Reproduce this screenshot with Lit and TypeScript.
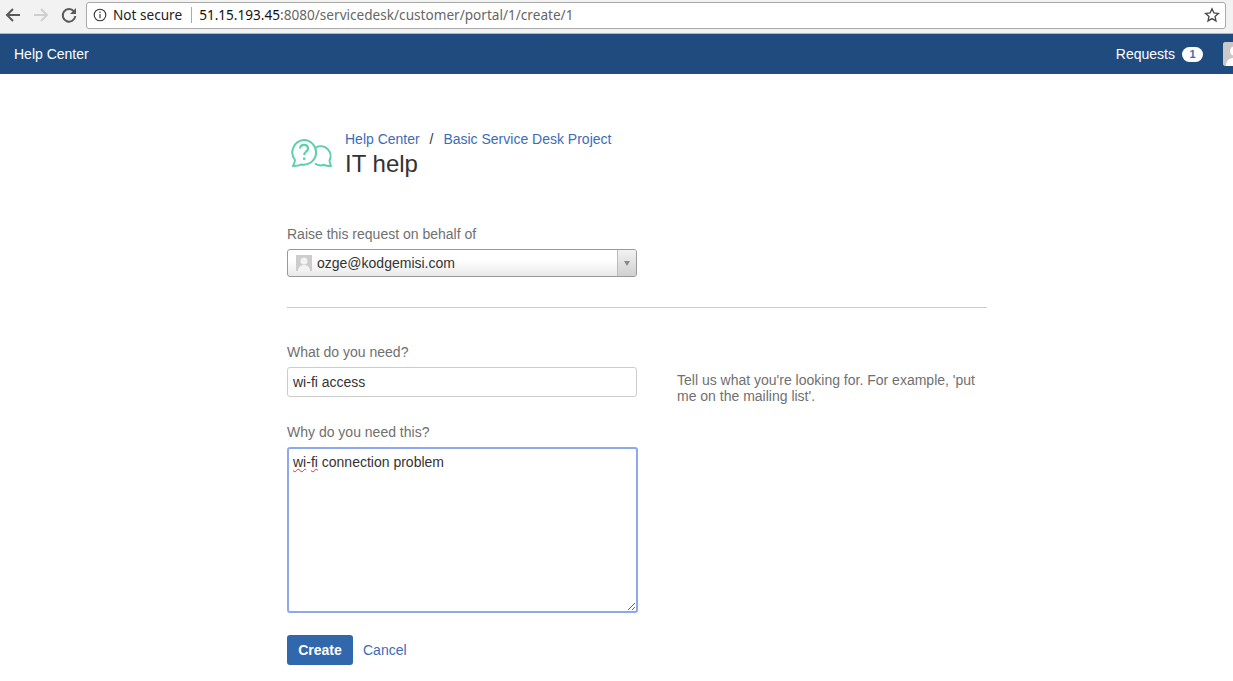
import { LitElement, html, css } from "lit";
import { customElement } from "lit/decorators.js";

@customElement("app-root")
export class AppRoot extends LitElement {
  static styles = css`
    :host { display: block; height: 681px; overflow: hidden; background: #fff; font-family: "Liberation Sans", Arial, sans-serif; font-size: 14px; color: #333; }
    * { box-sizing: border-box; }
    a { color: #3b6cb8; text-decoration: none; }
    .chrome { height: 34px; background: #f2f2f2; border-bottom: 1px solid #b5b5b5; display: flex; align-items: center; padding: 0 0 2px 3px; }
    .nav { width: 18px; height: 18px; display: block; }
    .navs { display: flex; gap: 10px; width: 83px; align-items: center; padding: 0 0 2px 1px; }
    .omni { width: 1140px; height: 27px; background: #fff; border: 1px solid #a9a9a9; border-radius: 3px; display: flex; align-items: center; padding: 0 5px 2px 6px; font-family: "Noto Sans", sans-serif; font-size: 13.6px; white-space: nowrap; color: #222; }
    .info { width: 14px; height: 14px; margin-right: 6px; flex: none; }
    .sep { width: 1px; height: 16px; background: #aaa; margin: 0 7px 0 9px; }
    .host { color: #111; }
    .path { color: #666; }
    .star { margin-left: auto; width: 16px; height: 16px; }
    .bar { height: 40px; background: #204b7f; display: flex; align-items: center; color: #fff; padding-left: 14px; overflow: hidden; }
    .bar .right { margin-left: auto; display: flex; align-items: center; }
    .badge { background: #fff; color: #3b6cb8; font-size: 11px; font-weight: 700; border-radius: 10px; width: 21px; height: 15px; margin: 0 20px 0 7px; display: flex; align-items: center; justify-content: center; }
    .avatar { width: 24px; height: 24px; background: #ccc; border-radius: 3px 0 0 3px; margin-right: -14px; flex: none; overflow: hidden; display: block; }
    .main { width: 700px; margin-left: 287px; }
    .head { display: flex; align-items: flex-start; padding-top: 57px; height: 150px; }
    .logo { width: 44px; height: 32px; margin: 6px 11px 0 3px; flex: none; }
    .crumbs { line-height: 16px; height: 16px; }
    .crumbs .slash { margin: 0 5px; color: #333; padding: 0 1px; }
    h1 { margin: 3px 0 0; font-size: 24px; font-weight: 400; line-height: 28px; color: #333; }
    label { display: block; color: #707070; line-height: 20px; }
    .select { width: 350px; height: 28px; margin-top: 5px; border: 1px solid #999; border-radius: 3px; background: linear-gradient(#fff 40%, #e8e8e8); display: flex; align-items: center; padding-left: 8px; position: relative; }
    .select .ua { width: 16px; height: 16px; margin-right: 5px; display: block; }
    .drop { margin-left: auto; width: 19px; height: 26px; border-left: 1px solid #bbb; background: linear-gradient(#f2f2f2, #d0d0d0); border-radius: 0 2px 2px 0; display: flex; align-items: center; justify-content: center; }
    .tri { width: 0; height: 0; border: 3px solid transparent; border-top: 5px solid #888; border-bottom: 0; }
    hr { border: 0; border-top: 1px solid #ccc; margin: 30px 0 34px; }
    .row { display: flex; }
    .col { width: 350px; flex: none; }
    .input { display: block; width: 350px; height: 30px; border: 1px solid #ccc; border-radius: 3px; margin-top: 5px; padding: 0 5px; line-height: 28px; font: inherit; color: #333; background: #fff; outline: none; }
    .help { color: #707070; margin: 30px 0 0 40px; width: 310px; line-height: 16px; }
    .second { margin-top: 18px; }
    .ta { width: 351px; height: 166px; margin-top: 5px; border: 2px solid #8fa8ec; border-radius: 3px; padding: 4px 4px; line-height: 18px; resize: both; overflow: auto; color: #333; }
    .sq { text-decoration: underline wavy #d33; text-decoration-thickness: 1px; text-underline-offset: 1px; }
    .actions { display: flex; align-items: center; margin-top: 22px; }
    .btn { width: 66px; height: 30px; background: #3067ad; color: #fff; border: 0; border-radius: 3px; font: 700 14px "Liberation Sans", Arial, sans-serif; margin-right: 10px; padding: 0; }
  `;

  render() {
    return html`
      <div class="chrome">
        <div class="navs">
          <svg class="nav" viewBox="0 0 18 18" fill="none" stroke="#5a5a5a" stroke-width="2"><path d="M16 9H3M9 3L3 9l6 6"/></svg>
          <svg class="nav" viewBox="0 0 18 18" fill="none" stroke="#cfcfcf" stroke-width="2"><path d="M2 9h13M9 3l6 6-6 6"/></svg>
          <svg class="nav" viewBox="0 0 18 18" fill="none" stroke="#5a5a5a" stroke-width="2"><path d="M14 5.500A6.300 6.300 0 1 0 15.300 10"/><path d="M16 2v6h-6z" fill="#5a5a5a" stroke="none"/></svg>
        </div>
        <div class="omni">
          <svg class="info" viewBox="0 0 14 14" fill="none" stroke="#333" stroke-width="1.1"><circle cx="7" cy="7" r="5.8"/><path d="M7 6v4.2M7 3.6v1.3"/></svg>
          <span>Not secure</span><span class="sep"></span><span class="host">51.15.193.45</span><span class="path">:8080/servicedesk/customer/portal/1/create/1</span>
          <svg class="star" viewBox="0 0 16 16" fill="none" stroke="#444" stroke-width="1.3"><path d="M8 1.8l1.9 4.2 4.5.4-3.4 3 1 4.5L8 11.6l-4 2.3 1-4.5-3.4-3 4.5-.4z"/></svg>
        </div>
      </div>
      <div class="bar">
        <span>Help Center</span>
        <div class="right">
          <span>Requests</span><span class="badge">1</span>
          <svg class="avatar" viewBox="0 0 24 24"><rect width="24" height="24" fill="#c9c9c9"/><circle cx="12" cy="9" r="5" fill="#fff"/><path d="M3 24c0-6 4-8 9-8s9 2 9 8z" fill="#fff"/></svg>
        </div>
      </div>
      <div class="main">
        <div class="head">
          <svg class="logo" viewBox="0 0 44 32" fill="none" stroke="#5fcfa8" stroke-width="2" stroke-linejoin="round">
            <path d="M14 3a12.400 12.400 0 0 0-9 20c-.2 2-1 4-2 6 3 .1 6-.3 8-1.500a12.400 12.400 0 1 0 3-24.500z"/>
            <path d="M26 10.500a9.800 9.800 0 0 1 13.500 13c.2 2 .8 4 1.500 5.500-2.500.2-5-.2-7-1.200-3 1-6.500.5-9-1.300"/>
            <path d="M10 11.500c.2-2.300 1.800-3.700 4-3.700 2.300 0 4 1.500 4 3.600 0 3.200-3.800 3-3.800 6.600" stroke-width="2.200"/>
            <path d="M14.200 20.500v2.400" stroke-width="2.400"/>
          </svg>
          <div>
            <div class="crumbs"><a href="#">Help Center</a><span class="slash"> / </span><a href="#">Basic Service Desk Project</a></div>
            <h1>IT help</h1>
          </div>
        </div>
        <label>Raise this request on behalf of</label>
        <div class="select">
          <svg class="ua" viewBox="0 0 16 16"><rect width="16" height="16" fill="#ccc"/><circle cx="8" cy="6" r="3.500" fill="#f2f2f2"/><path d="M2 16c0-4 3-6 6-6s6 2 6 6z" fill="#f2f2f2"/></svg>
          <span>ozge@kodgemisi.com</span>
          <span class="drop"><span class="tri"></span></span>
        </div>
        <hr />
        <div class="row">
          <div class="col">
            <label>What do you need?</label>
            <input class="input" .value=${"wi-fi access"} />
          </div>
          <div class="help">Tell us what you're looking for. For example, 'put me on the mailing list'.</div>
        </div>
        <label class="second">Why do you need this?</label>
        <div class="ta"><span class="sq">wi</span>-<span class="sq">fi</span> connection problem</div>
        <div class="actions">
          <button class="btn">Create</button>
          <a href="#">Cancel</a>
        </div>
      </div>
    `;
  }
}
